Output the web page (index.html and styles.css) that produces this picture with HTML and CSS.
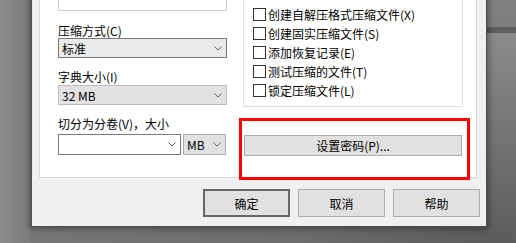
FILE: index.html
```html
<!DOCTYPE html>
<html lang="zh-CN">
<head>
<meta charset="utf-8">
<title>压缩文件名和参数</title>
<link rel="stylesheet" href="styles.css">
</head>
<body>
<div class="desktop">
  <div class="dialog">
    <div class="panel">
      <div class="col-left">
        <div class="textbox"></div>
        <div class="label l1">压缩方式(C)</div>
        <div class="combo combo-focus"><span>标准</span><svg class="chev" width="8" height="5" viewBox="0 0 8 5"><polyline points="0.5,0.5 4,4 7.5,0.5" fill="none" stroke="#606060" stroke-width="1"/></svg></div>
        <div class="label l2">字典大小(I)</div>
        <div class="combo combo-plain"><span>32 MB</span><svg class="chev" width="8" height="5" viewBox="0 0 8 5"><polyline points="0.5,0.5 4,4 7.5,0.5" fill="none" stroke="#606060" stroke-width="1"/></svg></div>
        <div class="label l3">切分为分卷(V)，大小</div>
        <div class="split">
          <div class="combo combo-edit"><span></span><svg class="chev" width="8" height="5" viewBox="0 0 8 5"><polyline points="0.5,0.5 4,4 7.5,0.5" fill="none" stroke="#606060" stroke-width="1"/></svg></div>
          <div class="combo combo-unit"><span>MB</span><svg class="chev" width="8" height="5" viewBox="0 0 8 5"><polyline points="0.5,0.5 4,4 7.5,0.5" fill="none" stroke="#606060" stroke-width="1"/></svg></div>
        </div>
      </div>
      <div class="col-right">
        <div class="group">
          <div class="check"><span class="box"></span><span>创建自解压格式压缩文件(X)</span></div>
          <div class="check"><span class="box"></span><span>创建固实压缩文件(S)</span></div>
          <div class="check"><span class="box"></span><span>添加恢复记录(E)</span></div>
          <div class="check"><span class="box"></span><span>测试压缩的文件(T)</span></div>
          <div class="check"><span class="box"></span><span>锁定压缩文件(L)</span></div>
        </div>
        <button class="btn btn-password">设置密码(P)...</button>
      </div>
    </div>
    <div class="actions">
      <button class="btn btn-default">确定</button>
      <button class="btn">取消</button>
      <button class="btn">帮助</button>
    </div>
  </div>
  <div class="highlight"></div>
</div>
</body>
</html>
```

FILE: styles.css
```css
* { box-sizing: border-box; }
html, body { margin: 0; padding: 0; }
body {
  width: 516px;
  height: 243px;
  overflow: hidden;
  font-family: "Noto Sans CJK SC", "Noto Sans", sans-serif;
  font-size: 12px;
  color: #000;
}
.desktop {
  position: relative;
  width: 516px;
  height: 243px;
  overflow: hidden;
  background:
    linear-gradient(180deg, transparent 27px, #5e5e5e 27px, #5e5e5e 33px, transparent 33px) right top / 30px 100% no-repeat,
    linear-gradient(180deg, #818181 0, #7e7e7e 27px, #8c8c8c 33px, #7a7a7a 110px, #5c5c5c 243px) right top / 30px 100% no-repeat,
    linear-gradient(90deg, #8c8c8c 0, #7b7b7b 31px) left top / 31px 100% no-repeat,
    linear-gradient(90deg, #777 0, #6c6c6c 300px, #595959 516px);
}
.dialog {
  position: absolute;
  left: 31px;
  top: -30px;
  width: 456px;
  height: 257px;
  background: #f0f0f0;
  border: 1px solid #4d4d4d;
  padding: 7px 6px 0 7px;
  box-shadow: 0 0 6px 2px rgba(0, 0, 0, 0.35);
}
.panel {
  height: 200px;
  margin-right: 3px;
  background: #fff;
  border: 1px solid #d9d9d9;
  padding-left: 18px;
  display: flex;
  align-items: flex-start;
}
.col-left { width: 169px; display: flex; flex-direction: column; }
.textbox {
  margin-top: 11px;
  height: 21px;
  border: 1px solid #cfcfcf;
  background: #fff;
}
.label { height: 14px; line-height: 14px; white-space: nowrap; }
.l1 { margin-top: 13px; }
.l2 { margin-top: 12px; }
.l3 { margin-top: 12px; }
.combo {
  height: 20px;
  display: flex;
  align-items: center;
  justify-content: space-between;
  padding: 0 4px 0 3px;
  border: 1px solid #adadad;
  background: #e1e1e1;
  white-space: nowrap;
}
.combo-focus { border-color: #7a7a7a; background: #eaeaea; }
.combo-plain { margin-top: 1px; border-color: #bdbdbd; background: #e2e2e2; }
.chev { display: block; flex: none; }
.split { margin-top: 3px; display: flex; gap: 2px; }
.combo-edit { width: 123px; height: 21px; background: #fff; border-color: #7a7a7a; }
.combo-unit { width: 43px; height: 21px; }
.col-right { width: 220px; margin-left: 16px; display: flex; flex-direction: column; }
.group {
  margin-top: 6px;
  border: 1px solid #dcdcdc;
  padding: 19px 0 6px 9px;
}
.check {
  height: 19px;
  display: flex;
  align-items: center;
  gap: 2px;
  white-space: nowrap;
}
.box {
  width: 13px;
  height: 13px;
  border: 1px solid #333;
  background: #fff;
  flex: none;
}
.btn {
  font-family: inherit;
  font-size: 12px;
  color: #000;
  background: #e1e1e1;
  border: 1px solid #adadad;
  padding: 0;
  margin: 0;
}
.btn-password { margin-top: 28px; margin-left: 1px; width: 218px; height: 21px; }
.actions {
  margin-top: 11px;
  display: flex;
  justify-content: flex-end;
  gap: 8px;
}
.actions .btn { width: 87px; height: 28px; }
.actions .btn-default { border: 2px solid #666; }
.highlight {
  position: absolute;
  left: 239px;
  top: 118px;
  width: 231px;
  height: 62px;
  border: 3px solid #f00;
}
```
